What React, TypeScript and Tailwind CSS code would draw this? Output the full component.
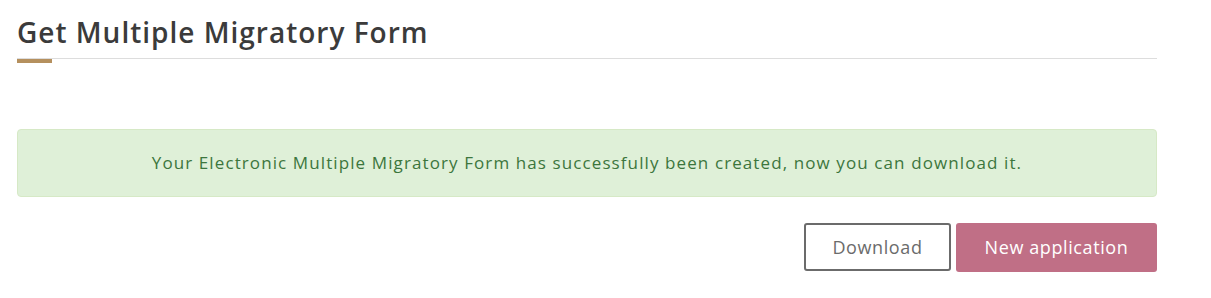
import React from "react";

export default function App() {
  return (
    <div className="min-h-screen bg-white" style={{ fontFamily: '"Open Sans", "DejaVu Sans", sans-serif' }}>
      <div className="w-[1140px] ml-[17px] pt-[14px]">
        <h1 className="text-[28px] leading-[36px] font-semibold tracking-[1px] text-[#3b3b3b]">Get Multiple Migratory Form</h1>
        <div className="mt-[8px] h-px bg-[#dddddd]" />
        <div className="w-[35px] h-[4px] bg-[#b5905e]" />

        <div className="mt-[66px] h-[68px] flex items-center justify-center rounded-[4px] border border-[#d6e9c6] bg-[#dff0d8] text-[17px] tracking-[1.1px] text-[#3c763d]">
          Your Electronic Multiple Migratory Form has successfully been created, now you can download it.
        </div>

        <div className="mt-[26px] flex justify-end gap-[5px]">
          <button className="w-[147px] h-[48px] rounded-[3px] border-2 border-[#6b6b6b] bg-white text-[18px] tracking-[0.6px] text-[#6b6b6b]">
            Download
          </button>
          <button className="w-[201px] h-[49px] rounded-[3px] bg-[#c06f86] text-[18px] tracking-[0.6px] text-white">
            New application
          </button>
        </div>
      </div>
    </div>
  );
}
